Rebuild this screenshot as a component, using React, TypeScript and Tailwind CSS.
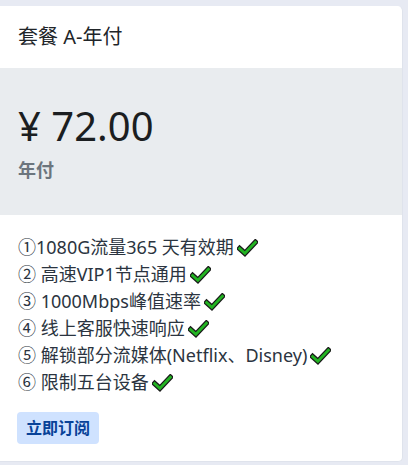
import React from 'react';

const Check = () => (
  <svg width="21" height="18" viewBox="0 0 20 17" className="inline-block ml-[3px] -mt-[3px] align-middle">
    <path d="M2.5 9 L7.5 13.5 L17.5 3" fill="none" stroke="#1a1a1a" strokeWidth="5" strokeLinecap="square" strokeLinejoin="miter" />
    <path d="M2.5 9 L7.5 13.5 L17.5 3" fill="none" stroke="#22b422" strokeWidth="2.6" strokeLinecap="square" strokeLinejoin="miter" />
  </svg>
);

const features = [
  '①1080G流量365 天有效期',
  '② 高速VIP1节点通用',
  '③ 1000Mbps峰值速率',
  '④ 线上客服快速响应',
  '⑤ 解锁部分流媒体(Netflix、Disney)',
  '⑥ 限制五台设备',
];

const App = () => {
  return (
    <div
      className="w-[408px] h-[465px] bg-[#e7eaf3] pt-[6px] overflow-hidden"
      style={{ fontFamily: '"Noto Sans", "Noto Sans CJK SC", sans-serif' }}
    >
      <div className="w-[403px] h-[456px] bg-white rounded-r-[5px] overflow-hidden flex flex-col text-[#212529] border-r border-b border-[#dfe3ec]">
        {/* Header */}
        <div className="h-[62px] flex items-center pl-[18px] text-[20px]">
          套餐 A-年付
        </div>

        {/* Price */}
        <div className="h-[147px] bg-[#e9ecef] pl-[18px] pt-[30px]">
          <div className="text-[40px] leading-[56px] text-[#1b1e21]">¥ 72.00</div>
          <div className="mt-[3px] text-[18px] leading-[27px] font-bold text-[#6c757d]">年付</div>
        </div>

        {/* Features */}
        <div className="flex-1 pl-[18px] pt-[19px]">
          <ul className="text-[18px] leading-[27px] text-[#2b3440]">
            {features.map((f, i) => (
              <li key={i} className="whitespace-nowrap">
                {f}
                <Check />
              </li>
            ))}
          </ul>
          <button className="mt-[16px] -ml-px h-[32px] px-[9px] rounded-[4px] bg-[#cfe2ff] text-[#084298] text-[16px] font-bold">
            立即订阅
          </button>
        </div>
      </div>
    </div>
  );
};

export default App;
